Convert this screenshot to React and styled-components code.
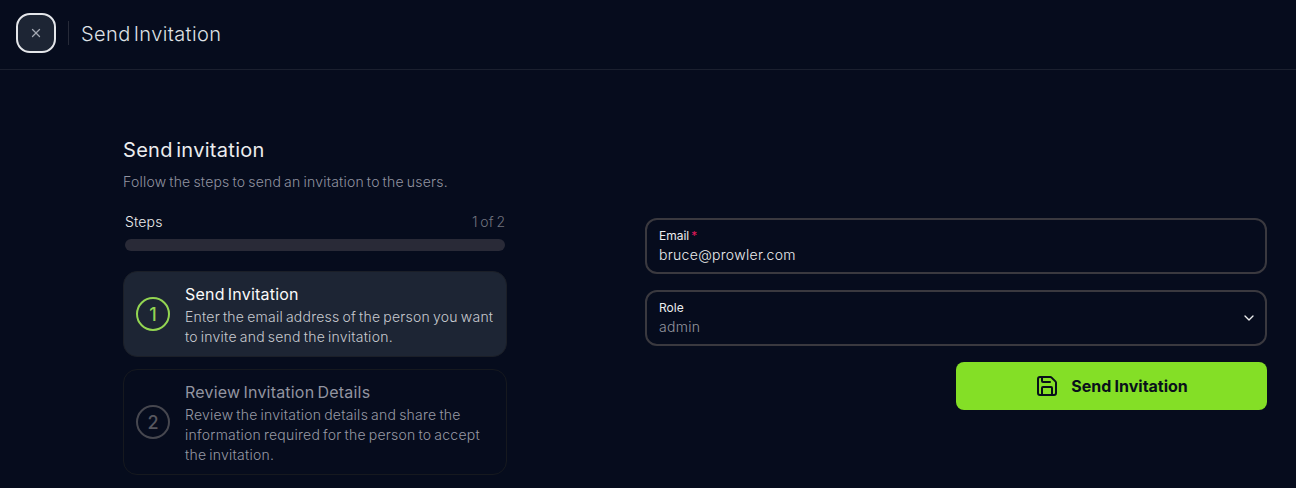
import React from "react";
import styled, { createGlobalStyle } from "styled-components";
import { Save, ChevronDown, X } from "lucide-react";

const Global = createGlobalStyle`
  *, *::before, *::after { box-sizing: border-box; }
  body {
    margin: 0;
    background: #060c1d;
    color: #ecedee;
    font-family: Inter, "Liberation Sans", sans-serif;
    -webkit-font-smoothing: antialiased;
  }
  h1, h2, h3, p { margin: 0; }
`;

const Page = styled.div`
  height: 488px;
  overflow: hidden;
`;

const Header = styled.header`
  display: flex;
  align-items: center;
  height: 70px;
  padding: 0 16px 3px;
  border-bottom: 1px solid #1b202f;
`;

const CloseButton = styled.button`
  display: flex;
  align-items: center;
  justify-content: center;
  width: 40px;
  height: 40px;
  padding: 0;
  border: 2px solid #e4e6ea;
  border-radius: 14px;
  background: #1d2534;
  color: #a3a7b1;
`;

const Divider = styled.span`
  width: 1px;
  height: 24px;
  margin: 0 12px;
  background: #262a38;
`;

const HeaderTitle = styled.h1`
  padding-top: 1px;
  font-size: 20px;
  line-height: 28px;
  font-weight: 300;
  letter-spacing: 0.4px;
  word-spacing: -3px;
  color: #dfe1e5;
`;

const Main = styled.main`
  display: flex;
  align-items: flex-start;
  gap: 138px;
  padding: 64px 29px 0 123px;
`;

const Guide = styled.section`
  width: 384px;
`;

const GuideTitle = styled.h2`
  font-size: 20px;
  line-height: 28px;
  font-weight: 400;
  letter-spacing: 0.3px;
  word-spacing: -2.5px;
  padding-top: 2px;
`;

const GuideText = styled.p`
  margin-top: 8px;
  font-size: 14px;
  line-height: 20px;
  font-weight: 300;
  letter-spacing: 0.22px;
  word-spacing: -1.2px;
  color: #9193a0;
`;

const ProgressHead = styled.div`
  display: flex;
  justify-content: space-between;
  margin: 20px 2px 0;
  font-size: 14px;
  line-height: 20px;
  font-weight: 350;
  letter-spacing: 0.2px;
`;

const ProgressCount = styled.span`
  font-weight: 300;
  letter-spacing: 0;
  word-spacing: -1px;
  color: #70737e;
`;

const Track = styled.div`
  height: 12px;
  margin: 7px 2px 20px;
  border-radius: 6px;
  background: #292a37;
`;

const StepList = styled.div`
  display: flex;
  flex-direction: column;
  gap: 12px;
`;

const StepCard = styled.div`
  display: flex;
  align-items: center;
  gap: 15px;
  padding: 10px 0 10px 12px;
  border: 1px solid ${(p) => (p.$active ? "#1b1f28" : "#16191f")};
  border-radius: 14px;
  background: ${(p) => (p.$active ? "#1d2534" : "transparent")};
`;

const StepNumber = styled.span`
  flex: none;
  display: flex;
  align-items: center;
  justify-content: center;
  width: 34px;
  height: 34px;
  padding-top: 1px;
  border: 2px solid ${(p) => (p.$active ? "#93d552" : "#46474f")};
  border-radius: 50%;
  color: ${(p) => (p.$active ? "#93d552" : "#56575f")};
  font-size: 18px;
  line-height: 28px;
  font-weight: 500;
`;

const StepTitle = styled.h3`
  font-size: 16px;
  line-height: 24px;
  font-weight: 400;
  letter-spacing: 0.2px;
  word-spacing: -1.5px;
  white-space: nowrap;
  color: ${(p) => (p.$active ? "#fafafa" : "#9294a0")};
`;

const StepLines = styled.div`
  padding-top: 1px;
  margin-bottom: -1px;
`;

const StepText = styled.p`
  font-size: 14px;
  line-height: 20px;
  font-weight: 300;
  letter-spacing: 0.24px;
  word-spacing: -1.2px;
  white-space: nowrap;
  color: ${(p) => (p.$active ? "#c8cad0" : "#9799a4")};
`;

const Form = styled.form`
  flex: 1;
  display: flex;
  flex-direction: column;
  gap: 16px;
  padding-top: 84px;
`;

const Field = styled.div`
  display: flex;
  align-items: center;
  justify-content: space-between;
  height: 56px;
  padding: 0 8px 0 12px;
  border: 2px solid #3a393f;
  border-radius: 12px;
`;

const FieldLabel = styled.div`
  font-size: 12px;
  line-height: 16px;
  font-weight: 400;
  letter-spacing: 0;
`;

const Required = styled.span`
  margin-left: 2px;
  color: #e0195a;
`;

const FieldValue = styled.div`
  padding-top: 1px;
  font-size: 14px;
  line-height: 20px;
  font-weight: ${(p) => (p.$muted ? 300 : 350)};
  letter-spacing: 0.3px;
  color: ${(p) => (p.$muted ? "#94969f" : "#ecedee")};
`;

const SubmitButton = styled.button`
  align-self: flex-end;
  display: flex;
  align-items: center;
  justify-content: center;
  gap: 12px;
  width: 311px;
  height: 48px;
  border: 0;
  border-radius: 8px;
  background: #84df26;
  color: #09101b;
  font: 700 16px/24px Inter, "Liberation Sans", sans-serif;
  letter-spacing: 0;
  word-spacing: -0.5px;
`;

const steps = [
  {
    title: "Send Invitation",
    lines: ["Enter the email address of the person you want", "to invite and send the invitation."],
  },
  {
    title: "Review Invitation Details",
    lines: [
      "Review the invitation details and share the",
      "information required for the person to accept",
      "the invitation.",
    ],
  },
];

export default function App() {
  return (
    <Page>
      <Global />
      <Header>
        <CloseButton type="button" aria-label="Close">
          <X size={14} strokeWidth={2.2} />
        </CloseButton>
        <Divider />
        <HeaderTitle>Send Invitation</HeaderTitle>
      </Header>
      <Main>
        <Guide>
          <GuideTitle>Send invitation</GuideTitle>
          <GuideText>Follow the steps to send an invitation to the users.</GuideText>
          <ProgressHead>
            <span>Steps</span>
            <ProgressCount>1 of 2</ProgressCount>
          </ProgressHead>
          <Track />
          <StepList>
            {steps.map((step, i) => (
              <StepCard key={step.title} $active={i === 0}>
                <StepNumber $active={i === 0}>{i + 1}</StepNumber>
                <div>
                  <StepTitle $active={i === 0}>{step.title}</StepTitle>
                  <StepLines>
                    {step.lines.map((line) => (
                      <StepText key={line} $active={i === 0}>{line}</StepText>
                    ))}
                  </StepLines>
                </div>
              </StepCard>
            ))}
          </StepList>
        </Guide>
        <Form>
          <Field>
            <div>
              <FieldLabel>Email<Required>*</Required></FieldLabel>
              <FieldValue>bruce@prowler.com</FieldValue>
            </div>
          </Field>
          <Field>
            <div>
              <FieldLabel>Role</FieldLabel>
              <FieldValue $muted>admin</FieldValue>
            </div>
            <ChevronDown size={16} strokeWidth={2} />
          </Field>
          <SubmitButton type="button">
            <Save size={24} strokeWidth={2} />
            Send Invitation
          </SubmitButton>
        </Form>
      </Main>
    </Page>
  );
}
